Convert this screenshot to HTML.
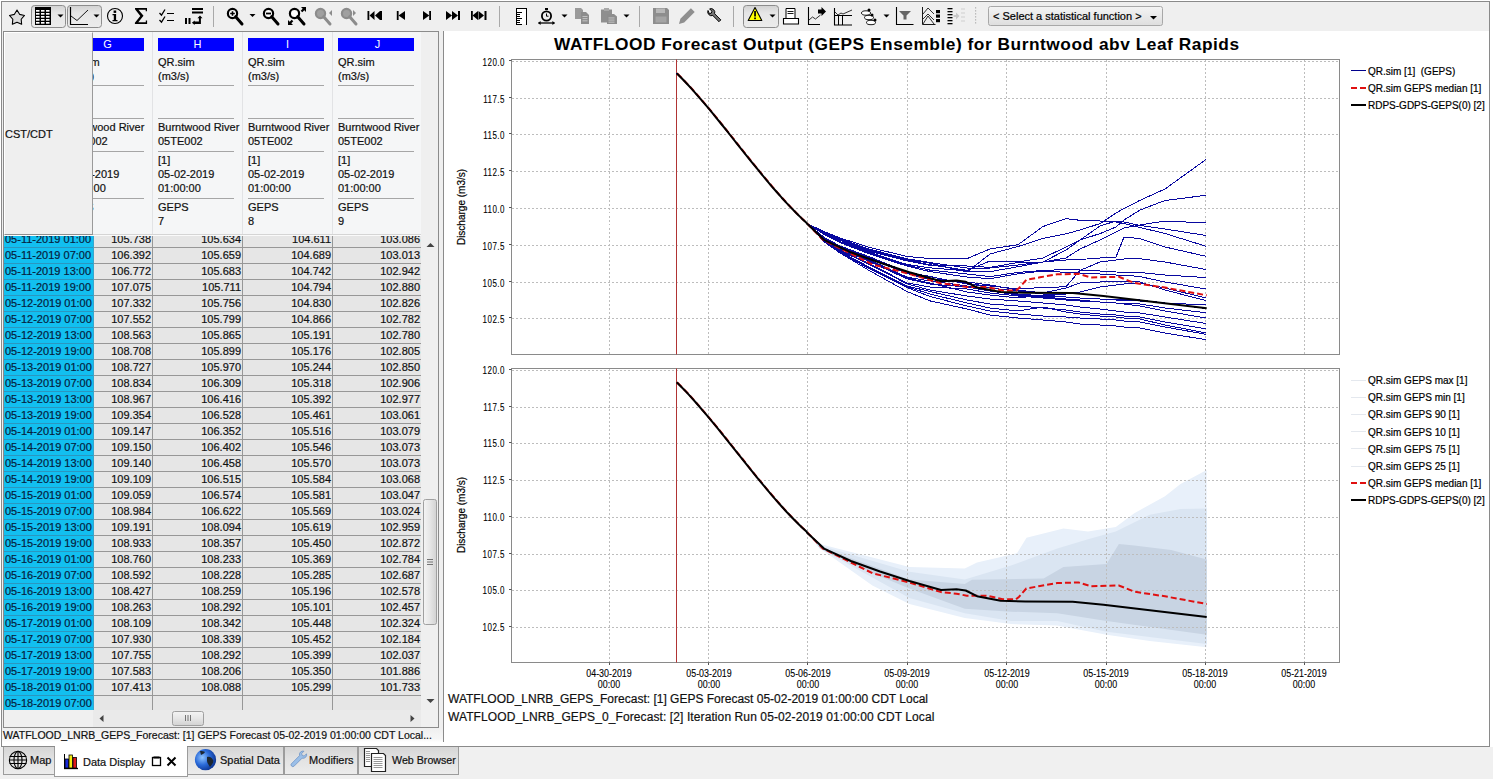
<!DOCTYPE html>
<html><head><meta charset="utf-8"><style>
*{box-sizing:border-box}
html,body{margin:0;padding:0}
body{width:1493px;height:779px;position:relative;overflow:hidden;background:#fff;font-family:"Liberation Sans",sans-serif;font-size:11px;color:#000}
.a{position:absolute}
.t{position:absolute;white-space:nowrap;line-height:1;-webkit-text-stroke:0.2px currentColor}
</style></head><body>

<div class="a" style="left:0;top:0;width:1493px;height:779px;background:#f0f0f0"></div>
<div class="a" style="left:1px;top:1px;width:1489px;height:746px;border:1px solid #8a8a8a;border-bottom:none;background:#efefef"></div>
<div class="a" style="left:1490px;top:0;width:3px;height:747px;background:#fff"></div>
<div class="a" style="left:0;top:0;width:1493px;height:1px;background:#fff"></div>
<div class="a" style="left:0;top:0;width:1px;height:747px;background:#fff"></div>
<svg class="a" style="left:0;top:0" width="1493" height="31" viewBox="0 0 1493 31">
<defs><linearGradient id="tg" x1="0" y1="0" x2="0" y2="1"><stop offset="0" stop-color="#d2d2d2"/><stop offset="0.35" stop-color="#e6e6e6"/><stop offset="1" stop-color="#ececec"/></linearGradient><linearGradient id="cg" x1="0" y1="0" x2="0" y2="1"><stop offset="0" stop-color="#f4f4f4"/><stop offset="1" stop-color="#dedede"/></linearGradient></defs>
<polygon points="17.00,10.00 19.59,14.34 24.51,15.46 21.18,19.26 21.64,24.29 17.00,22.30 12.36,24.29 12.82,19.26 9.49,15.46 14.41,14.34" fill="#dcdcdc" stroke="#000" stroke-width="1.1" stroke-linejoin="round"/>
<rect x="31.5" y="5.5" width="34" height="22" rx="3" ry="3" fill="url(#tg)" stroke="#8d8d8d" stroke-width="1"/>
<rect x="35" y="7" width="16" height="18" fill="#000"/>
<rect x="36" y="10" width="3.5" height="1.7" fill="#fff"/>
<rect x="41" y="10" width="3.5" height="1.7" fill="#fff"/>
<rect x="46" y="10" width="3.5" height="1.7" fill="#fff"/>
<rect x="36" y="13" width="3.5" height="1.7" fill="#fff"/>
<rect x="41" y="13" width="3.5" height="1.7" fill="#fff"/>
<rect x="46" y="13" width="3.5" height="1.7" fill="#fff"/>
<rect x="36" y="16" width="3.5" height="1.7" fill="#fff"/>
<rect x="41" y="16" width="3.5" height="1.7" fill="#fff"/>
<rect x="46" y="16" width="3.5" height="1.7" fill="#fff"/>
<rect x="36" y="19" width="3.5" height="1.7" fill="#fff"/>
<rect x="41" y="19" width="3.5" height="1.7" fill="#fff"/>
<rect x="46" y="19" width="3.5" height="1.7" fill="#fff"/>
<rect x="36" y="22" width="3.5" height="1.7" fill="#fff"/>
<rect x="41" y="22" width="3.5" height="1.7" fill="#fff"/>
<rect x="46" y="22" width="3.5" height="1.7" fill="#fff"/>
<path d="M57.5 14.5h6l-3 3z" fill="#000"/>
<rect x="67.5" y="5.5" width="34" height="22" rx="3" ry="3" fill="url(#tg)" stroke="#8d8d8d" stroke-width="1"/>
<path d="M70.5 7v17.5H88" fill="none" stroke="#000" stroke-width="1.2"/>
<path d="M71 16l6 4.5 11-10.5" fill="none" stroke="#000" stroke-width="0.9"/>
<path d="M93.5 14.5h6l-3 3z" fill="#000"/>
<circle cx="115" cy="16" r="7.5" fill="none" stroke="#000" stroke-width="1.1"/>
<rect x="113.6" y="10.5" width="2.6" height="2.4" fill="#000"/><path d="M112.5 14h3.6v6h1.4v1.3h-5v-1.3h1.3v-4.7h-1.3z" fill="#000"/>
<path d="M135 8h12v3.2h-1.3v-1.4h-7.2l5 6-5.2 6.4h7.5v-1.6h1.3v3.4h-12.2v-1.3l5.4-6.8-5.3-6.6z" fill="#000"/>
<path d="M159.5 13l2 2.2 3.5-5.7M159.5 20l2 2.2 3.5-5.7" fill="none" stroke="#000" stroke-width="1.3"/>
<rect x="167" y="13" width="7" height="1" fill="#000" shape-rendering="crispEdges"/><rect x="167" y="20" width="7" height="1" fill="#000" shape-rendering="crispEdges"/>
<rect x="192" y="8" width="11" height="2" fill="#000"/><rect x="192" y="11.5" width="11" height="2" fill="#000"/>
<rect x="185" y="18" width="2" height="6" fill="#000"/><rect x="188.5" y="18" width="2" height="6" fill="#000"/>
<path d="M200 15.5l2.5 2.8h-1.6v5.7h-6.2v1l-2.8-2.3 2.8-2.3v1h4.2v-3.1h-1.5z" fill="#000"/>
<rect x="213.0" y="6" width="1" height="21" fill="#a9a9a9"/>
<g><circle cx="232.5" cy="13.5" r="4.6" fill="#fff" stroke="#000" stroke-width="2.2"/><path d="M235.7 16.7L242 24.0" stroke="#000" stroke-width="3" stroke-linecap="round"/><path d="M230.2 13.5h4.6M232.5 11.2v4.6" stroke="#000" stroke-width="1.6"/></g>
<path d="M249.5 14h6l-3 3z" fill="#000"/>
<g><circle cx="268.5" cy="13.5" r="4.6" fill="#fff" stroke="#000" stroke-width="2.2"/><path d="M271.7 16.7L278 24.0" stroke="#000" stroke-width="3" stroke-linecap="round"/><path d="M266 13.5h5" stroke="#000" stroke-width="1.8"/></g>
<g><circle cx="294.5" cy="13.5" r="4.6" fill="#fff" stroke="#000" stroke-width="2.2"/><path d="M297.7 16.7L304 24.0" stroke="#000" stroke-width="3" stroke-linecap="round"/></g>
<path d="M301 7h5v5l-1.7-1.7-2 2-1.6-1.6 2-2z" fill="#000"/><path d="M288 25v-5l1.7 1.7 2-2 1.6 1.6-2 2 1.7 1.7z" fill="#000"/>
<g><circle cx="320.5" cy="13.5" r="4.6" fill="#a0a0a0" stroke="#8c8c8c" stroke-width="2.2"/><path d="M323.7 16.7L330 24.0" stroke="#8c8c8c" stroke-width="3" stroke-linecap="round"/></g>
<path d="M332 10v6l-3-3z" fill="#8c8c8c"/>
<g><circle cx="346.5" cy="13.5" r="4.6" fill="#a0a0a0" stroke="#8c8c8c" stroke-width="2.2"/><path d="M349.7 16.7L356 24.0" stroke="#8c8c8c" stroke-width="3" stroke-linecap="round"/></g>
<path d="M353 10v6l3-3z" fill="#8c8c8c"/>
<rect x="367.5" y="11" width="1.8" height="9" fill="#000"/><path d="M369.5 15.5l5-4.5v9z M375 15.5l5-4.5v9z" fill="#000"/><rect x="380" y="11" width="2" height="9" fill="#000"/>
<rect x="396.8" y="11" width="1.8" height="9" fill="#000"/><path d="M398.5 15.5l6.5-4.5v9z" fill="#000"/>
<rect x="429.2" y="11" width="1.8" height="9" fill="#000"/><path d="M423 11l6.3 4.5-6.3 4.5z" fill="#000"/>
<path d="M446 11l6 4.5-6 4.5z M452 11l6 4.5-6 4.5z" fill="#000"/><rect x="458" y="11" width="2" height="9" fill="#000"/>
<rect x="471" y="11" width="1.8" height="9" fill="#000"/><path d="M472.5 15.5l5.5-4.5v9z M478.5 11l5.5 4.5-5.5 4.5z" fill="#000"/><rect x="484.5" y="11" width="2" height="9" fill="#000"/>
<rect x="499.0" y="6" width="1" height="21" fill="#a9a9a9"/>
<g shape-rendering="crispEdges"><rect x="517" y="9" width="9" height="15" fill="#fff"/><rect x="516" y="8" width="1" height="17" fill="#000"/><rect x="516" y="8" width="11" height="1" fill="#000"/><rect x="526" y="8" width="1" height="17" fill="#000"/>
<rect x="516" y="12" width="6" height="1" fill="#000"/>
<rect x="516" y="14" width="4" height="1" fill="#000"/>
<rect x="516" y="16" width="4" height="1" fill="#000"/>
<rect x="516" y="18" width="6" height="1" fill="#000"/>
<rect x="516" y="20" width="4" height="1" fill="#000"/>
<rect x="516" y="22" width="4" height="1" fill="#000"/>
<rect x="516" y="24" width="6" height="1" fill="#000"/>
</g>
<circle cx="546.5" cy="16" r="4.6" fill="none" stroke="#000" stroke-width="1.8"/><rect x="545" y="8" width="3" height="2" fill="#000"/><path d="M546.5 13.5v2.7h2" stroke="#000" stroke-width="1" fill="none"/>
<path d="M538.5 23h16" stroke="#000" stroke-width="1.3"/><path d="M538 23l2.6-2v4zM555 23l-2.6-2v4z" fill="#000"/>
<path d="M561.5 14.5h6l-3 3z" fill="#000"/>
<path d="M575 8h6l2 2v9h-8z" fill="#9a9a9a"/><path d="M581 12h5l3 3v9h-8z" fill="#8d8d8d"/>
<rect x="582.5" y="16.0" width="5" height="0.9" fill="#c9c9c9"/>
<rect x="582.5" y="18.2" width="5" height="0.9" fill="#c9c9c9"/>
<rect x="582.5" y="20.4" width="5" height="0.9" fill="#c9c9c9"/>
<path d="M601 9.5h11v13h-11z" fill="#8f8f8f" rx="2"/><rect x="604" y="8" width="5" height="3" fill="#a8a8a8"/><path d="M607 14h7l3 2.5v7.5h-10z" fill="#8d8d8d"/>
<rect x="608.5" y="17.5" width="6" height="0.9" fill="#c9c9c9"/>
<rect x="608.5" y="19.6" width="6" height="0.9" fill="#c9c9c9"/>
<rect x="608.5" y="21.7" width="6" height="0.9" fill="#c9c9c9"/>
<path d="M623.5 14.5h6l-3 3z" fill="#000"/>
<rect x="639.0" y="6" width="1" height="21" fill="#a9a9a9"/>
<path d="M653 8h14l2 2v14h-16z" fill="#8d8d8d"/><rect x="656" y="8.5" width="9" height="4.5" fill="#b8b8b8"/><rect x="655.5" y="16.5" width="11" height="6" fill="#a4a4a4"/>
<path d="M679 24l1.4-5.2 10.5-10.5 3.8 3.8-10.5 10.5z" fill="#8f8f8f"/>
<path d="M708 10.5a3.8 3.8 0 0 0 4.8 5l6.2 6.2 1.8-1.8-6.2-6.2a3.8 3.8 0 0 0-5-4.8l2.3 2.3-0.6 1.9-1.9 0.6z" fill="#777" stroke="#000" stroke-width="1"/>
<rect x="733.0" y="6" width="1" height="21" fill="#a9a9a9"/>
<rect x="743.5" y="5.5" width="35" height="22" rx="3" ry="3" fill="url(#tg)" stroke="#8d8d8d" stroke-width="1"/>
<path d="M755 7.5l6.8 13h-13.6z" fill="#ffff00" stroke="#000" stroke-width="1.1" stroke-linejoin="round"/><rect x="754.2" y="11" width="1.7" height="5.5" fill="#000"/><rect x="754.2" y="17.5" width="1.7" height="1.7" fill="#000"/>
<path d="M769.5 14.5h6l-3 3z" fill="#000"/>
<path d="M786 8.5h9v10h-9z" fill="#fff" stroke="#000" stroke-width="1"/><path d="M787.5 11.5h6M787.5 13.5h6" stroke="#000" stroke-width="0.9"/><path d="M783.5 18.5h15v5.5h-15z" fill="#fff" stroke="#000" stroke-width="1.1"/>
<path d="M808.5 7v17.5h11.5" fill="none" stroke="#000" stroke-width="1.1"/><path d="M809 20l3.5-3 3 2 5-4" fill="none" stroke="#000" stroke-width="0.8"/><path d="M818 9.5h3.5v-2.5l4.5 4.5-4.5 4.5v-2.5h-3.5z" fill="#000"/>
<path d="M834.5 8v17h17.5" fill="none" stroke="#000" stroke-width="1.1"/><path d="M835 12l3 3 3-2 2 1 9-4" fill="none" stroke="#000" stroke-width="0.8"/><path d="M834.5 15.5h17.5" stroke="#000" stroke-width="1"/><path d="M838.5 15.5v9.5M842.5 15.5v9.5" stroke="#000" stroke-width="1"/>
<g fill="#fff" stroke="#000" stroke-width="0.9"><ellipse cx="866" cy="13" rx="4.5" ry="2.2"/><ellipse cx="869" cy="17.5" rx="4.5" ry="2.2"/><ellipse cx="871" cy="22.5" rx="4.5" ry="2.2"/></g><g fill="#000"><circle cx="869" cy="10" r="1.5"/><circle cx="872" cy="15" r="1.5"/><circle cx="875" cy="20" r="1.5"/></g>
<path d="M883.5 14.5h6l-3 3z" fill="#000"/>
<path d="M896.5 7v17.5h17" fill="none" stroke="#000" stroke-width="1.1"/><path d="M899 11h12l-4.5 4.5v4h-3v-4z" fill="#666"/>
<path d="M922.5 7v17.5h13" fill="none" stroke="#000" stroke-width="0.9"/><path d="M923 14l5-6 6 6M923 24l5-8 6 8M923 19l5-5 6 6" fill="none" stroke="#000" stroke-width="0.8"/><rect x="936" y="10" width="4" height="3.2" fill="#000"/><rect x="936" y="14.5" width="4" height="3.2" fill="#000"/><rect x="936" y="19" width="4" height="3.2" fill="#000"/>
<rect x="947.5" y="8" width="5" height="1.3" fill="#000"/>
<rect x="947.5" y="11" width="5" height="1.3" fill="#000"/>
<rect x="947.5" y="14" width="5" height="1.3" fill="#000"/>
<rect x="947.5" y="17" width="5" height="1.3" fill="#000"/>
<rect x="947.5" y="20" width="5" height="1.3" fill="#000"/>
<rect x="947.5" y="23" width="5" height="1.3" fill="#000"/>
<path d="M953.5 15h2.5v-2.5l3.5 3.5-3.5 3.5v-2.5h-2.5z" fill="#c8c8c8"/>
<rect x="961" y="8.5" width="4" height="1" fill="#d0d0d0"/>
<rect x="961" y="12.5" width="4" height="1" fill="#d0d0d0"/>
<rect x="961" y="16.5" width="4" height="1" fill="#d0d0d0"/>
<rect x="961" y="20.5" width="4" height="1" fill="#d0d0d0"/>
<rect x="975" y="7" width="1.2" height="1.6" fill="#bcbcbc"/>
<rect x="975" y="10" width="1.2" height="1.6" fill="#bcbcbc"/>
<rect x="975" y="13" width="1.2" height="1.6" fill="#bcbcbc"/>
<rect x="975" y="16" width="1.2" height="1.6" fill="#bcbcbc"/>
<rect x="975" y="19" width="1.2" height="1.6" fill="#bcbcbc"/>
<rect x="975" y="22" width="1.2" height="1.6" fill="#bcbcbc"/>
<rect x="988.5" y="6.5" width="174" height="19" rx="2" fill="url(#cg)" stroke="#a8a8a8"/>
<path d="M1150 16h7l-3.5 3.5z" fill="#000"/>
</svg>
<div class="t" style="left:993px;top:11px;font-size:11px;color:#000">&lt; Select a statistical function &gt;</div>
<div class="a" style="left:3px;top:31px;width:436px;height:697px;border:1px solid #8b8b8b;background:#f0f0f0"></div>
<div class="a" style="left:93px;top:32px;width:328px;height:203px;background:#f5f6f7"></div>
<div class="a" style="left:421px;top:32px;width:17px;height:678px;background:#efefef"></div>
<div class="a" style="left:4px;top:32px;width:89px;height:203px;background:#efefef;border-top:1px solid #fff;border-left:1px solid #fff;border-right:1px solid #9a9a9a;border-bottom:1px solid #8f8f8f"></div>
<div class="t" style="left:5px;top:129px;font-size:11px;color:#111">CST/CDT</div>
<div class="a" style="left:152px;top:32px;width:1px;height:203px;background:#e2e3e5"></div>
<div class="a" style="left:242px;top:32px;width:1px;height:203px;background:#e2e3e5"></div>
<div class="a" style="left:332px;top:32px;width:1px;height:203px;background:#e2e3e5"></div>
<div class="a" style="left:93px;top:234px;width:328px;height:1px;background:#d5d5d5"></div>
<div class="a" style="left:93px;top:32px;width:328px;height:203px;overflow:hidden">
<div class="a" style="left:-25px;top:6px;width:76px;height:13px;background:#0000ff;color:#fff;text-align:center;font-size:11px;line-height:13px;padding-left:3px">G</div>
<div class="a" style="left:-25px;top:53px;width:76px;height:1px;background:#a6a6a6"></div>
<div class="a" style="left:-25px;top:86px;width:76px;height:1px;background:#a6a6a6"></div>
<div class="a" style="left:-25px;top:119px;width:76px;height:1px;background:#a6a6a6"></div>
<div class="a" style="left:-25px;top:166px;width:76px;height:1px;background:#a6a6a6"></div>
<div class="t" style="left:-30px;top:25px;font-size:11px;color:#111">QR.sim</div>
<div class="t" style="left:-30px;top:39px;font-size:11px;color:#111">(m3/s)</div>
<div class="t" style="left:-30px;top:90px;font-size:11px;color:#111">Burntwood River</div>
<div class="t" style="left:-30px;top:104px;font-size:11px;color:#111">05TE002</div>
<div class="t" style="left:-30px;top:123px;font-size:11px;color:#111">[1]</div>
<div class="t" style="left:-30px;top:137px;font-size:11px;color:#111">05-02-2019</div>
<div class="t" style="left:-30px;top:151px;font-size:11px;color:#111">01:00:00</div>
<div class="t" style="left:-30px;top:170px;font-size:11px;color:#111">GEPS</div>
<div class="t" style="left:-30px;top:184px;font-size:11px;color:#111">7</div>
<div class="a" style="left:65px;top:6px;width:76px;height:13px;background:#0000ff;color:#fff;text-align:center;font-size:11px;line-height:13px;padding-left:3px">H</div>
<div class="a" style="left:65px;top:53px;width:76px;height:1px;background:#a6a6a6"></div>
<div class="a" style="left:65px;top:86px;width:76px;height:1px;background:#a6a6a6"></div>
<div class="a" style="left:65px;top:119px;width:76px;height:1px;background:#a6a6a6"></div>
<div class="a" style="left:65px;top:166px;width:76px;height:1px;background:#a6a6a6"></div>
<div class="t" style="left:65px;top:25px;font-size:11px;color:#111">QR.sim</div>
<div class="t" style="left:65px;top:39px;font-size:11px;color:#111">(m3/s)</div>
<div class="t" style="left:65px;top:90px;font-size:11px;color:#111">Burntwood River</div>
<div class="t" style="left:65px;top:104px;font-size:11px;color:#111">05TE002</div>
<div class="t" style="left:65px;top:123px;font-size:11px;color:#111">[1]</div>
<div class="t" style="left:65px;top:137px;font-size:11px;color:#111">05-02-2019</div>
<div class="t" style="left:65px;top:151px;font-size:11px;color:#111">01:00:00</div>
<div class="t" style="left:65px;top:170px;font-size:11px;color:#111">GEPS</div>
<div class="t" style="left:65px;top:184px;font-size:11px;color:#111">7</div>
<div class="a" style="left:155px;top:6px;width:76px;height:13px;background:#0000ff;color:#fff;text-align:center;font-size:11px;line-height:13px;padding-left:3px">I</div>
<div class="a" style="left:155px;top:53px;width:76px;height:1px;background:#a6a6a6"></div>
<div class="a" style="left:155px;top:86px;width:76px;height:1px;background:#a6a6a6"></div>
<div class="a" style="left:155px;top:119px;width:76px;height:1px;background:#a6a6a6"></div>
<div class="a" style="left:155px;top:166px;width:76px;height:1px;background:#a6a6a6"></div>
<div class="t" style="left:155px;top:25px;font-size:11px;color:#111">QR.sim</div>
<div class="t" style="left:155px;top:39px;font-size:11px;color:#111">(m3/s)</div>
<div class="t" style="left:155px;top:90px;font-size:11px;color:#111">Burntwood River</div>
<div class="t" style="left:155px;top:104px;font-size:11px;color:#111">05TE002</div>
<div class="t" style="left:155px;top:123px;font-size:11px;color:#111">[1]</div>
<div class="t" style="left:155px;top:137px;font-size:11px;color:#111">05-02-2019</div>
<div class="t" style="left:155px;top:151px;font-size:11px;color:#111">01:00:00</div>
<div class="t" style="left:155px;top:170px;font-size:11px;color:#111">GEPS</div>
<div class="t" style="left:155px;top:184px;font-size:11px;color:#111">8</div>
<div class="a" style="left:245px;top:6px;width:76px;height:13px;background:#0000ff;color:#fff;text-align:center;font-size:11px;line-height:13px;padding-left:3px">J</div>
<div class="a" style="left:245px;top:53px;width:76px;height:1px;background:#a6a6a6"></div>
<div class="a" style="left:245px;top:86px;width:76px;height:1px;background:#a6a6a6"></div>
<div class="a" style="left:245px;top:119px;width:76px;height:1px;background:#a6a6a6"></div>
<div class="a" style="left:245px;top:166px;width:76px;height:1px;background:#a6a6a6"></div>
<div class="t" style="left:245px;top:25px;font-size:11px;color:#111">QR.sim</div>
<div class="t" style="left:245px;top:39px;font-size:11px;color:#111">(m3/s)</div>
<div class="t" style="left:245px;top:90px;font-size:11px;color:#111">Burntwood River</div>
<div class="t" style="left:245px;top:104px;font-size:11px;color:#111">05TE002</div>
<div class="t" style="left:245px;top:123px;font-size:11px;color:#111">[1]</div>
<div class="t" style="left:245px;top:137px;font-size:11px;color:#111">05-02-2019</div>
<div class="t" style="left:245px;top:151px;font-size:11px;color:#111">01:00:00</div>
<div class="t" style="left:245px;top:170px;font-size:11px;color:#111">GEPS</div>
<div class="t" style="left:245px;top:184px;font-size:11px;color:#111">9</div>
</div>
<div class="a" style="left:4px;top:235px;width:417px;height:1px;background:#fafafa"></div>
<div class="a" style="left:4px;top:236px;width:417px;height:474px;overflow:hidden">
<div class="a" style="left:0;top:-4px;width:90px;height:16px;background:#12bff0;border-bottom:1px solid #2a97c0"></div>
<div class="t" style="left:1px;top:-2px;font-size:11px;color:#06213d">05-11-2019 01:00</div>
<div class="a" style="left:90px;top:-4px;width:327px;height:16px;background:#e6e6e6;border-bottom:1px solid #979797"></div>
<div class="t" style="left:-53px;width:200px;text-align:right;top:-2px;font-size:11px;color:#111">105.738</div>
<div class="t" style="left:37px;width:200px;text-align:right;top:-2px;font-size:11px;color:#111">105.634</div>
<div class="t" style="left:127px;width:200px;text-align:right;top:-2px;font-size:11px;color:#111">104.611</div>
<div class="t" style="left:216px;width:200px;text-align:right;top:-2px;font-size:11px;color:#111">103.086</div>
<div class="a" style="left:0;top:12px;width:90px;height:16px;background:#12bff0;border-bottom:1px solid #2a97c0"></div>
<div class="t" style="left:1px;top:14px;font-size:11px;color:#06213d">05-11-2019 07:00</div>
<div class="a" style="left:90px;top:12px;width:327px;height:16px;background:#e6e6e6;border-bottom:1px solid #979797"></div>
<div class="t" style="left:-53px;width:200px;text-align:right;top:14px;font-size:11px;color:#111">106.392</div>
<div class="t" style="left:37px;width:200px;text-align:right;top:14px;font-size:11px;color:#111">105.659</div>
<div class="t" style="left:127px;width:200px;text-align:right;top:14px;font-size:11px;color:#111">104.689</div>
<div class="t" style="left:216px;width:200px;text-align:right;top:14px;font-size:11px;color:#111">103.013</div>
<div class="a" style="left:0;top:28px;width:90px;height:16px;background:#12bff0;border-bottom:1px solid #2a97c0"></div>
<div class="t" style="left:1px;top:30px;font-size:11px;color:#06213d">05-11-2019 13:00</div>
<div class="a" style="left:90px;top:28px;width:327px;height:16px;background:#e6e6e6;border-bottom:1px solid #979797"></div>
<div class="t" style="left:-53px;width:200px;text-align:right;top:30px;font-size:11px;color:#111">106.772</div>
<div class="t" style="left:37px;width:200px;text-align:right;top:30px;font-size:11px;color:#111">105.683</div>
<div class="t" style="left:127px;width:200px;text-align:right;top:30px;font-size:11px;color:#111">104.742</div>
<div class="t" style="left:216px;width:200px;text-align:right;top:30px;font-size:11px;color:#111">102.942</div>
<div class="a" style="left:0;top:44px;width:90px;height:16px;background:#12bff0;border-bottom:1px solid #2a97c0"></div>
<div class="t" style="left:1px;top:46px;font-size:11px;color:#06213d">05-11-2019 19:00</div>
<div class="a" style="left:90px;top:44px;width:327px;height:16px;background:#e6e6e6;border-bottom:1px solid #979797"></div>
<div class="t" style="left:-53px;width:200px;text-align:right;top:46px;font-size:11px;color:#111">107.075</div>
<div class="t" style="left:37px;width:200px;text-align:right;top:46px;font-size:11px;color:#111">105.711</div>
<div class="t" style="left:127px;width:200px;text-align:right;top:46px;font-size:11px;color:#111">104.794</div>
<div class="t" style="left:216px;width:200px;text-align:right;top:46px;font-size:11px;color:#111">102.880</div>
<div class="a" style="left:0;top:60px;width:90px;height:16px;background:#12bff0;border-bottom:1px solid #2a97c0"></div>
<div class="t" style="left:1px;top:62px;font-size:11px;color:#06213d">05-12-2019 01:00</div>
<div class="a" style="left:90px;top:60px;width:327px;height:16px;background:#e6e6e6;border-bottom:1px solid #979797"></div>
<div class="t" style="left:-53px;width:200px;text-align:right;top:62px;font-size:11px;color:#111">107.332</div>
<div class="t" style="left:37px;width:200px;text-align:right;top:62px;font-size:11px;color:#111">105.756</div>
<div class="t" style="left:127px;width:200px;text-align:right;top:62px;font-size:11px;color:#111">104.830</div>
<div class="t" style="left:216px;width:200px;text-align:right;top:62px;font-size:11px;color:#111">102.826</div>
<div class="a" style="left:0;top:76px;width:90px;height:16px;background:#12bff0;border-bottom:1px solid #2a97c0"></div>
<div class="t" style="left:1px;top:78px;font-size:11px;color:#06213d">05-12-2019 07:00</div>
<div class="a" style="left:90px;top:76px;width:327px;height:16px;background:#e6e6e6;border-bottom:1px solid #979797"></div>
<div class="t" style="left:-53px;width:200px;text-align:right;top:78px;font-size:11px;color:#111">107.552</div>
<div class="t" style="left:37px;width:200px;text-align:right;top:78px;font-size:11px;color:#111">105.799</div>
<div class="t" style="left:127px;width:200px;text-align:right;top:78px;font-size:11px;color:#111">104.866</div>
<div class="t" style="left:216px;width:200px;text-align:right;top:78px;font-size:11px;color:#111">102.782</div>
<div class="a" style="left:0;top:92px;width:90px;height:16px;background:#12bff0;border-bottom:1px solid #2a97c0"></div>
<div class="t" style="left:1px;top:94px;font-size:11px;color:#06213d">05-12-2019 13:00</div>
<div class="a" style="left:90px;top:92px;width:327px;height:16px;background:#e6e6e6;border-bottom:1px solid #979797"></div>
<div class="t" style="left:-53px;width:200px;text-align:right;top:94px;font-size:11px;color:#111">108.563</div>
<div class="t" style="left:37px;width:200px;text-align:right;top:94px;font-size:11px;color:#111">105.865</div>
<div class="t" style="left:127px;width:200px;text-align:right;top:94px;font-size:11px;color:#111">105.191</div>
<div class="t" style="left:216px;width:200px;text-align:right;top:94px;font-size:11px;color:#111">102.780</div>
<div class="a" style="left:0;top:108px;width:90px;height:16px;background:#12bff0;border-bottom:1px solid #2a97c0"></div>
<div class="t" style="left:1px;top:110px;font-size:11px;color:#06213d">05-12-2019 19:00</div>
<div class="a" style="left:90px;top:108px;width:327px;height:16px;background:#e6e6e6;border-bottom:1px solid #979797"></div>
<div class="t" style="left:-53px;width:200px;text-align:right;top:110px;font-size:11px;color:#111">108.708</div>
<div class="t" style="left:37px;width:200px;text-align:right;top:110px;font-size:11px;color:#111">105.899</div>
<div class="t" style="left:127px;width:200px;text-align:right;top:110px;font-size:11px;color:#111">105.176</div>
<div class="t" style="left:216px;width:200px;text-align:right;top:110px;font-size:11px;color:#111">102.805</div>
<div class="a" style="left:0;top:124px;width:90px;height:16px;background:#12bff0;border-bottom:1px solid #2a97c0"></div>
<div class="t" style="left:1px;top:126px;font-size:11px;color:#06213d">05-13-2019 01:00</div>
<div class="a" style="left:90px;top:124px;width:327px;height:16px;background:#e6e6e6;border-bottom:1px solid #979797"></div>
<div class="t" style="left:-53px;width:200px;text-align:right;top:126px;font-size:11px;color:#111">108.727</div>
<div class="t" style="left:37px;width:200px;text-align:right;top:126px;font-size:11px;color:#111">105.970</div>
<div class="t" style="left:127px;width:200px;text-align:right;top:126px;font-size:11px;color:#111">105.244</div>
<div class="t" style="left:216px;width:200px;text-align:right;top:126px;font-size:11px;color:#111">102.850</div>
<div class="a" style="left:0;top:140px;width:90px;height:16px;background:#12bff0;border-bottom:1px solid #2a97c0"></div>
<div class="t" style="left:1px;top:142px;font-size:11px;color:#06213d">05-13-2019 07:00</div>
<div class="a" style="left:90px;top:140px;width:327px;height:16px;background:#e6e6e6;border-bottom:1px solid #979797"></div>
<div class="t" style="left:-53px;width:200px;text-align:right;top:142px;font-size:11px;color:#111">108.834</div>
<div class="t" style="left:37px;width:200px;text-align:right;top:142px;font-size:11px;color:#111">106.309</div>
<div class="t" style="left:127px;width:200px;text-align:right;top:142px;font-size:11px;color:#111">105.318</div>
<div class="t" style="left:216px;width:200px;text-align:right;top:142px;font-size:11px;color:#111">102.906</div>
<div class="a" style="left:0;top:156px;width:90px;height:16px;background:#12bff0;border-bottom:1px solid #2a97c0"></div>
<div class="t" style="left:1px;top:158px;font-size:11px;color:#06213d">05-13-2019 13:00</div>
<div class="a" style="left:90px;top:156px;width:327px;height:16px;background:#e6e6e6;border-bottom:1px solid #979797"></div>
<div class="t" style="left:-53px;width:200px;text-align:right;top:158px;font-size:11px;color:#111">108.967</div>
<div class="t" style="left:37px;width:200px;text-align:right;top:158px;font-size:11px;color:#111">106.416</div>
<div class="t" style="left:127px;width:200px;text-align:right;top:158px;font-size:11px;color:#111">105.392</div>
<div class="t" style="left:216px;width:200px;text-align:right;top:158px;font-size:11px;color:#111">102.977</div>
<div class="a" style="left:0;top:172px;width:90px;height:16px;background:#12bff0;border-bottom:1px solid #2a97c0"></div>
<div class="t" style="left:1px;top:174px;font-size:11px;color:#06213d">05-13-2019 19:00</div>
<div class="a" style="left:90px;top:172px;width:327px;height:16px;background:#e6e6e6;border-bottom:1px solid #979797"></div>
<div class="t" style="left:-53px;width:200px;text-align:right;top:174px;font-size:11px;color:#111">109.354</div>
<div class="t" style="left:37px;width:200px;text-align:right;top:174px;font-size:11px;color:#111">106.528</div>
<div class="t" style="left:127px;width:200px;text-align:right;top:174px;font-size:11px;color:#111">105.461</div>
<div class="t" style="left:216px;width:200px;text-align:right;top:174px;font-size:11px;color:#111">103.061</div>
<div class="a" style="left:0;top:188px;width:90px;height:16px;background:#12bff0;border-bottom:1px solid #2a97c0"></div>
<div class="t" style="left:1px;top:190px;font-size:11px;color:#06213d">05-14-2019 01:00</div>
<div class="a" style="left:90px;top:188px;width:327px;height:16px;background:#e6e6e6;border-bottom:1px solid #979797"></div>
<div class="t" style="left:-53px;width:200px;text-align:right;top:190px;font-size:11px;color:#111">109.147</div>
<div class="t" style="left:37px;width:200px;text-align:right;top:190px;font-size:11px;color:#111">106.352</div>
<div class="t" style="left:127px;width:200px;text-align:right;top:190px;font-size:11px;color:#111">105.516</div>
<div class="t" style="left:216px;width:200px;text-align:right;top:190px;font-size:11px;color:#111">103.079</div>
<div class="a" style="left:0;top:204px;width:90px;height:16px;background:#12bff0;border-bottom:1px solid #2a97c0"></div>
<div class="t" style="left:1px;top:206px;font-size:11px;color:#06213d">05-14-2019 07:00</div>
<div class="a" style="left:90px;top:204px;width:327px;height:16px;background:#e6e6e6;border-bottom:1px solid #979797"></div>
<div class="t" style="left:-53px;width:200px;text-align:right;top:206px;font-size:11px;color:#111">109.150</div>
<div class="t" style="left:37px;width:200px;text-align:right;top:206px;font-size:11px;color:#111">106.402</div>
<div class="t" style="left:127px;width:200px;text-align:right;top:206px;font-size:11px;color:#111">105.546</div>
<div class="t" style="left:216px;width:200px;text-align:right;top:206px;font-size:11px;color:#111">103.073</div>
<div class="a" style="left:0;top:220px;width:90px;height:16px;background:#12bff0;border-bottom:1px solid #2a97c0"></div>
<div class="t" style="left:1px;top:222px;font-size:11px;color:#06213d">05-14-2019 13:00</div>
<div class="a" style="left:90px;top:220px;width:327px;height:16px;background:#e6e6e6;border-bottom:1px solid #979797"></div>
<div class="t" style="left:-53px;width:200px;text-align:right;top:222px;font-size:11px;color:#111">109.140</div>
<div class="t" style="left:37px;width:200px;text-align:right;top:222px;font-size:11px;color:#111">106.458</div>
<div class="t" style="left:127px;width:200px;text-align:right;top:222px;font-size:11px;color:#111">105.570</div>
<div class="t" style="left:216px;width:200px;text-align:right;top:222px;font-size:11px;color:#111">103.073</div>
<div class="a" style="left:0;top:236px;width:90px;height:16px;background:#12bff0;border-bottom:1px solid #2a97c0"></div>
<div class="t" style="left:1px;top:238px;font-size:11px;color:#06213d">05-14-2019 19:00</div>
<div class="a" style="left:90px;top:236px;width:327px;height:16px;background:#e6e6e6;border-bottom:1px solid #979797"></div>
<div class="t" style="left:-53px;width:200px;text-align:right;top:238px;font-size:11px;color:#111">109.109</div>
<div class="t" style="left:37px;width:200px;text-align:right;top:238px;font-size:11px;color:#111">106.515</div>
<div class="t" style="left:127px;width:200px;text-align:right;top:238px;font-size:11px;color:#111">105.584</div>
<div class="t" style="left:216px;width:200px;text-align:right;top:238px;font-size:11px;color:#111">103.068</div>
<div class="a" style="left:0;top:252px;width:90px;height:16px;background:#12bff0;border-bottom:1px solid #2a97c0"></div>
<div class="t" style="left:1px;top:254px;font-size:11px;color:#06213d">05-15-2019 01:00</div>
<div class="a" style="left:90px;top:252px;width:327px;height:16px;background:#e6e6e6;border-bottom:1px solid #979797"></div>
<div class="t" style="left:-53px;width:200px;text-align:right;top:254px;font-size:11px;color:#111">109.059</div>
<div class="t" style="left:37px;width:200px;text-align:right;top:254px;font-size:11px;color:#111">106.574</div>
<div class="t" style="left:127px;width:200px;text-align:right;top:254px;font-size:11px;color:#111">105.581</div>
<div class="t" style="left:216px;width:200px;text-align:right;top:254px;font-size:11px;color:#111">103.047</div>
<div class="a" style="left:0;top:268px;width:90px;height:16px;background:#12bff0;border-bottom:1px solid #2a97c0"></div>
<div class="t" style="left:1px;top:270px;font-size:11px;color:#06213d">05-15-2019 07:00</div>
<div class="a" style="left:90px;top:268px;width:327px;height:16px;background:#e6e6e6;border-bottom:1px solid #979797"></div>
<div class="t" style="left:-53px;width:200px;text-align:right;top:270px;font-size:11px;color:#111">108.984</div>
<div class="t" style="left:37px;width:200px;text-align:right;top:270px;font-size:11px;color:#111">106.622</div>
<div class="t" style="left:127px;width:200px;text-align:right;top:270px;font-size:11px;color:#111">105.569</div>
<div class="t" style="left:216px;width:200px;text-align:right;top:270px;font-size:11px;color:#111">103.024</div>
<div class="a" style="left:0;top:284px;width:90px;height:16px;background:#12bff0;border-bottom:1px solid #2a97c0"></div>
<div class="t" style="left:1px;top:286px;font-size:11px;color:#06213d">05-15-2019 13:00</div>
<div class="a" style="left:90px;top:284px;width:327px;height:16px;background:#e6e6e6;border-bottom:1px solid #979797"></div>
<div class="t" style="left:-53px;width:200px;text-align:right;top:286px;font-size:11px;color:#111">109.191</div>
<div class="t" style="left:37px;width:200px;text-align:right;top:286px;font-size:11px;color:#111">108.094</div>
<div class="t" style="left:127px;width:200px;text-align:right;top:286px;font-size:11px;color:#111">105.619</div>
<div class="t" style="left:216px;width:200px;text-align:right;top:286px;font-size:11px;color:#111">102.959</div>
<div class="a" style="left:0;top:300px;width:90px;height:16px;background:#12bff0;border-bottom:1px solid #2a97c0"></div>
<div class="t" style="left:1px;top:302px;font-size:11px;color:#06213d">05-15-2019 19:00</div>
<div class="a" style="left:90px;top:300px;width:327px;height:16px;background:#e6e6e6;border-bottom:1px solid #979797"></div>
<div class="t" style="left:-53px;width:200px;text-align:right;top:302px;font-size:11px;color:#111">108.933</div>
<div class="t" style="left:37px;width:200px;text-align:right;top:302px;font-size:11px;color:#111">108.357</div>
<div class="t" style="left:127px;width:200px;text-align:right;top:302px;font-size:11px;color:#111">105.450</div>
<div class="t" style="left:216px;width:200px;text-align:right;top:302px;font-size:11px;color:#111">102.872</div>
<div class="a" style="left:0;top:316px;width:90px;height:16px;background:#12bff0;border-bottom:1px solid #2a97c0"></div>
<div class="t" style="left:1px;top:318px;font-size:11px;color:#06213d">05-16-2019 01:00</div>
<div class="a" style="left:90px;top:316px;width:327px;height:16px;background:#e6e6e6;border-bottom:1px solid #979797"></div>
<div class="t" style="left:-53px;width:200px;text-align:right;top:318px;font-size:11px;color:#111">108.760</div>
<div class="t" style="left:37px;width:200px;text-align:right;top:318px;font-size:11px;color:#111">108.233</div>
<div class="t" style="left:127px;width:200px;text-align:right;top:318px;font-size:11px;color:#111">105.369</div>
<div class="t" style="left:216px;width:200px;text-align:right;top:318px;font-size:11px;color:#111">102.784</div>
<div class="a" style="left:0;top:332px;width:90px;height:16px;background:#12bff0;border-bottom:1px solid #2a97c0"></div>
<div class="t" style="left:1px;top:334px;font-size:11px;color:#06213d">05-16-2019 07:00</div>
<div class="a" style="left:90px;top:332px;width:327px;height:16px;background:#e6e6e6;border-bottom:1px solid #979797"></div>
<div class="t" style="left:-53px;width:200px;text-align:right;top:334px;font-size:11px;color:#111">108.592</div>
<div class="t" style="left:37px;width:200px;text-align:right;top:334px;font-size:11px;color:#111">108.228</div>
<div class="t" style="left:127px;width:200px;text-align:right;top:334px;font-size:11px;color:#111">105.285</div>
<div class="t" style="left:216px;width:200px;text-align:right;top:334px;font-size:11px;color:#111">102.687</div>
<div class="a" style="left:0;top:348px;width:90px;height:16px;background:#12bff0;border-bottom:1px solid #2a97c0"></div>
<div class="t" style="left:1px;top:350px;font-size:11px;color:#06213d">05-16-2019 13:00</div>
<div class="a" style="left:90px;top:348px;width:327px;height:16px;background:#e6e6e6;border-bottom:1px solid #979797"></div>
<div class="t" style="left:-53px;width:200px;text-align:right;top:350px;font-size:11px;color:#111">108.427</div>
<div class="t" style="left:37px;width:200px;text-align:right;top:350px;font-size:11px;color:#111">108.259</div>
<div class="t" style="left:127px;width:200px;text-align:right;top:350px;font-size:11px;color:#111">105.196</div>
<div class="t" style="left:216px;width:200px;text-align:right;top:350px;font-size:11px;color:#111">102.578</div>
<div class="a" style="left:0;top:364px;width:90px;height:16px;background:#12bff0;border-bottom:1px solid #2a97c0"></div>
<div class="t" style="left:1px;top:366px;font-size:11px;color:#06213d">05-16-2019 19:00</div>
<div class="a" style="left:90px;top:364px;width:327px;height:16px;background:#e6e6e6;border-bottom:1px solid #979797"></div>
<div class="t" style="left:-53px;width:200px;text-align:right;top:366px;font-size:11px;color:#111">108.263</div>
<div class="t" style="left:37px;width:200px;text-align:right;top:366px;font-size:11px;color:#111">108.292</div>
<div class="t" style="left:127px;width:200px;text-align:right;top:366px;font-size:11px;color:#111">105.101</div>
<div class="t" style="left:216px;width:200px;text-align:right;top:366px;font-size:11px;color:#111">102.457</div>
<div class="a" style="left:0;top:380px;width:90px;height:16px;background:#12bff0;border-bottom:1px solid #2a97c0"></div>
<div class="t" style="left:1px;top:382px;font-size:11px;color:#06213d">05-17-2019 01:00</div>
<div class="a" style="left:90px;top:380px;width:327px;height:16px;background:#e6e6e6;border-bottom:1px solid #979797"></div>
<div class="t" style="left:-53px;width:200px;text-align:right;top:382px;font-size:11px;color:#111">108.109</div>
<div class="t" style="left:37px;width:200px;text-align:right;top:382px;font-size:11px;color:#111">108.342</div>
<div class="t" style="left:127px;width:200px;text-align:right;top:382px;font-size:11px;color:#111">105.448</div>
<div class="t" style="left:216px;width:200px;text-align:right;top:382px;font-size:11px;color:#111">102.324</div>
<div class="a" style="left:0;top:396px;width:90px;height:16px;background:#12bff0;border-bottom:1px solid #2a97c0"></div>
<div class="t" style="left:1px;top:398px;font-size:11px;color:#06213d">05-17-2019 07:00</div>
<div class="a" style="left:90px;top:396px;width:327px;height:16px;background:#e6e6e6;border-bottom:1px solid #979797"></div>
<div class="t" style="left:-53px;width:200px;text-align:right;top:398px;font-size:11px;color:#111">107.930</div>
<div class="t" style="left:37px;width:200px;text-align:right;top:398px;font-size:11px;color:#111">108.339</div>
<div class="t" style="left:127px;width:200px;text-align:right;top:398px;font-size:11px;color:#111">105.452</div>
<div class="t" style="left:216px;width:200px;text-align:right;top:398px;font-size:11px;color:#111">102.184</div>
<div class="a" style="left:0;top:412px;width:90px;height:16px;background:#12bff0;border-bottom:1px solid #2a97c0"></div>
<div class="t" style="left:1px;top:414px;font-size:11px;color:#06213d">05-17-2019 13:00</div>
<div class="a" style="left:90px;top:412px;width:327px;height:16px;background:#e6e6e6;border-bottom:1px solid #979797"></div>
<div class="t" style="left:-53px;width:200px;text-align:right;top:414px;font-size:11px;color:#111">107.755</div>
<div class="t" style="left:37px;width:200px;text-align:right;top:414px;font-size:11px;color:#111">108.292</div>
<div class="t" style="left:127px;width:200px;text-align:right;top:414px;font-size:11px;color:#111">105.399</div>
<div class="t" style="left:216px;width:200px;text-align:right;top:414px;font-size:11px;color:#111">102.037</div>
<div class="a" style="left:0;top:428px;width:90px;height:16px;background:#12bff0;border-bottom:1px solid #2a97c0"></div>
<div class="t" style="left:1px;top:430px;font-size:11px;color:#06213d">05-17-2019 19:00</div>
<div class="a" style="left:90px;top:428px;width:327px;height:16px;background:#e6e6e6;border-bottom:1px solid #979797"></div>
<div class="t" style="left:-53px;width:200px;text-align:right;top:430px;font-size:11px;color:#111">107.583</div>
<div class="t" style="left:37px;width:200px;text-align:right;top:430px;font-size:11px;color:#111">108.206</div>
<div class="t" style="left:127px;width:200px;text-align:right;top:430px;font-size:11px;color:#111">105.350</div>
<div class="t" style="left:216px;width:200px;text-align:right;top:430px;font-size:11px;color:#111">101.886</div>
<div class="a" style="left:0;top:444px;width:90px;height:16px;background:#12bff0;border-bottom:1px solid #2a97c0"></div>
<div class="t" style="left:1px;top:446px;font-size:11px;color:#06213d">05-18-2019 01:00</div>
<div class="a" style="left:90px;top:444px;width:327px;height:16px;background:#e6e6e6;border-bottom:1px solid #979797"></div>
<div class="t" style="left:-53px;width:200px;text-align:right;top:446px;font-size:11px;color:#111">107.413</div>
<div class="t" style="left:37px;width:200px;text-align:right;top:446px;font-size:11px;color:#111">108.088</div>
<div class="t" style="left:127px;width:200px;text-align:right;top:446px;font-size:11px;color:#111">105.299</div>
<div class="t" style="left:216px;width:200px;text-align:right;top:446px;font-size:11px;color:#111">101.733</div>
<div class="a" style="left:0;top:460px;width:90px;height:16px;background:#12bff0;border-bottom:1px solid #2a97c0"></div>
<div class="t" style="left:1px;top:462px;font-size:11px;color:#06213d">05-18-2019 07:00</div>
<div class="a" style="left:90px;top:460px;width:327px;height:16px;background:#e6e6e6;border-bottom:1px solid #979797"></div>
<div class="a" style="left:148px;top:0;width:1px;height:475px;background:#979797"></div>
<div class="a" style="left:238px;top:0;width:1px;height:475px;background:#979797"></div>
<div class="a" style="left:328px;top:0;width:1px;height:475px;background:#979797"></div>
<div class="a" style="left:89px;top:0;width:1px;height:475px;background:#3aa6cc"></div>
</div>
<div class="a" style="left:93px;top:710px;width:328px;height:17px;background:#eaeaea"></div>
<svg class="a" style="left:0;top:0" width="445" height="745" viewBox="0 0 445 745"><path d="M99.5 718.5l4-3.5v7z" fill="#444"/><path d="M414.5 718.5l-4-3.5v7z" fill="#444"/><rect x="172.5" y="711.5" width="31" height="14" rx="2" fill="url(#hth)" stroke="#a0a0a0"/><path d="M185.5 715v6M188 715v6M190.5 715v6" stroke="#666" stroke-width="0.9"/><path d="M430.5 243l-4 4h8z" fill="#444"/><path d="M430.5 703l-4-4h8z" fill="#444"/><defs><linearGradient id="vth" x1="0" y1="0" x2="1" y2="0"><stop offset="0" stop-color="#f4f4f4"/><stop offset="0.5" stop-color="#e6e6e6"/><stop offset="1" stop-color="#d2d2d2"/></linearGradient><linearGradient id="hth" x1="0" y1="0" x2="0" y2="1"><stop offset="0" stop-color="#f4f4f4"/><stop offset="0.5" stop-color="#e6e6e6"/><stop offset="1" stop-color="#d2d2d2"/></linearGradient></defs><rect x="423.5" y="499.5" width="13" height="125" rx="2" fill="url(#vth)" stroke="#a0a0a0"/><path d="M427 559.5h6M427 562h6M427 564.5h6" stroke="#666" stroke-width="0.9"/></svg>
<div class="a" style="left:2px;top:728px;width:441px;height:18px;background:linear-gradient(#efefef,#f6f6f6 60%,#fff 80%)"></div>
<div class="t" style="left:3px;top:730px;font-size:11px;color:#111;transform:scaleX(0.955);transform-origin:0 0">WATFLOOD_LNRB_GEPS_Forecast: [1] GEPS Forecast 05-02-2019 01:00:00 CDT Local...</div>
<div class="a" style="left:443px;top:31px;width:1046px;height:715px;background:#fff"></div>
<div class="a" style="left:443px;top:31px;width:1px;height:711px;background:#8b8b8b"></div>
<svg class="a" style="left:0;top:0" width="1493" height="779" viewBox="0 0 1493 779">
<defs><clipPath id="ct"><rect x="512" y="60" width="827" height="294"/></clipPath><clipPath id="cb"><rect x="512" y="369" width="827" height="293"/></clipPath></defs>
<polygon points="806.9,531.6 820.0,544.0 909.4,567.0 964.8,568.6 977.0,562.4 1017.0,553.2 1026.5,537.8 1063.4,528.6 1088.0,531.6 1115.8,527.0 1134.3,513.2 1165.0,496.2 1180.5,483.9 1206.7,470.0 1206.7,647.2 1149.7,641.0 1106.6,634.8 1057.0,625.6 1011.0,624.0 964.8,617.9 909.4,604.0 872.4,585.5 820.0,548.6 806.9,531.6" fill="#e8f0fa"/>
<polygon points="806.9,531.6 820.0,545.5 909.4,571.7 964.8,579.4 1011.0,565.5 1057.3,548.6 1088.0,539.3 1115.8,531.6 1149.7,514.7 1180.5,509.1 1206.7,508.5 1206.7,644.0 1106.6,631.8 1057.3,621.0 1011.0,621.0 964.8,613.3 909.4,597.9 820.0,548.6 806.9,531.6" fill="#dae5f2"/>
<polygon points="806.9,531.6 820.0,547.0 909.4,579.4 964.8,584.0 972.0,579.8 1043.6,578.5 1063.4,567.0 1106.6,564.0 1118.9,544.0 1134.3,545.5 1171.2,550.0 1206.7,559.4 1206.7,634.8 1106.6,621.0 1057.3,613.3 1011.0,611.7 964.8,608.7 909.4,588.6 872.4,573.2 820.0,548.6 806.9,531.6" fill="#c8d4e3"/>
<path d="M609.5 59.5V354.5M609.5 368.5V662.5 M708.5 59.5V354.5M708.5 368.5V662.5 M807.5 59.5V354.5M807.5 368.5V662.5 M907.5 59.5V354.5M907.5 368.5V662.5 M1006.5 59.5V354.5M1006.5 368.5V662.5 M1106.5 59.5V354.5M1106.5 368.5V662.5 M1205.5 59.5V354.5M1205.5 368.5V662.5 M1304.5 59.5V354.5M1304.5 368.5V662.5 M511.5 318.5H1339.5M511.5 627.5H1339.5 M511.5 282.5H1339.5M511.5 590.5H1339.5 M511.5 245.5H1339.5M511.5 554.5H1339.5 M511.5 208.5H1339.5M511.5 517.5H1339.5 M511.5 171.5H1339.5M511.5 480.5H1339.5 M511.5 134.5H1339.5M511.5 443.5H1339.5 M511.5 98.5H1339.5M511.5 407.5H1339.5 M511.5 61.5H1339.5M511.5 370.5H1339.5" stroke="#bdbdbd" stroke-width="1" stroke-dasharray="2 2" fill="none" shape-rendering="crispEdges"/>
<rect x="511.5" y="59.5" width="828.0" height="295.0" fill="none" stroke="#8a8a8a"/>
<rect x="511.5" y="368.5" width="828.0" height="294.0" fill="none" stroke="#8a8a8a"/>
<path d="M509 317.5H511.5M509 626.5H511.5 M509 281.5H511.5M509 589.5H511.5 M509 244.5H511.5M509 553.5H511.5 M509 207.5H511.5M509 516.5H511.5 M509 170.5H511.5M509 479.5H511.5 M509 133.5H511.5M509 442.5H511.5 M509 97.5H511.5M509 406.5H511.5 M509 60.5H511.5M509 369.5H511.5 M609.5 662.5V665 M708.5 662.5V665 M807.5 662.5V665 M907.5 662.5V665 M1006.5 662.5V665 M1106.5 662.5V665 M1205.5 662.5V665 M1304.5 662.5V665" stroke="#555" stroke-width="1"/>
<path d="M676.5 59.5V354.5M676.5 368.5V662.5" stroke="#b03434" stroke-width="1"/>
<g clip-path="url(#ct)"><path d="M676.7 73.2 L681.7 78.2 L686.7 83.5 L691.7 88.9 L696.7 94.6 L701.7 100.3 L706.7 106.2 L711.7 112.2 L716.7 118.3 L721.7 124.5 L726.7 130.7 L731.7 137.0 L736.7 143.3 L741.7 149.6 L746.7 155.8 L751.7 162.1 L756.7 168.2 L761.7 174.3 L766.7 180.3 L771.7 186.3 L776.7 192.0 L781.7 197.7 L786.7 203.1 L791.7 208.4 L796.7 213.5 L801.7 218.4 L806.7 223.0 L806.9 223.6 L825.0 233.0 L840.0 239.5 L870.0 250.0 L907.0 259.5 L930.0 263.2 L967.0 272.0 L990.0 254.0 L1018.0 246.5 L1043.0 238.5 L1066.0 233.8 L1080.0 230.0 L1100.0 223.6 L1116.0 213.0 L1124.0 208.5 L1140.0 200.3 L1165.0 189.0 L1206.0 159.5 M676.7 73.2 L681.7 78.2 L686.7 83.5 L691.7 88.9 L696.7 94.6 L701.7 100.3 L706.7 106.2 L711.7 112.2 L716.7 118.3 L721.7 124.5 L726.7 130.7 L731.7 137.0 L736.7 143.3 L741.7 149.6 L746.7 155.8 L751.7 162.1 L756.7 168.2 L761.7 174.3 L766.7 180.3 L771.7 186.3 L776.7 192.0 L781.7 197.7 L786.7 203.1 L791.7 208.4 L796.7 213.5 L801.7 218.4 L806.7 223.0 L806.9 223.6 L825.0 232.0 L840.0 238.0 L870.0 247.5 L907.0 256.5 L930.0 258.5 L967.0 258.6 L990.0 249.0 L1018.0 244.7 L1043.0 226.5 L1066.0 218.6 L1080.0 220.3 L1100.0 221.0 L1116.0 222.0 L1124.0 223.5 L1140.0 227.5 L1165.0 233.5 L1206.0 246.3 M676.7 73.2 L681.7 78.2 L686.7 83.5 L691.7 88.9 L696.7 94.6 L701.7 100.3 L706.7 106.2 L711.7 112.2 L716.7 118.3 L721.7 124.5 L726.7 130.7 L731.7 137.0 L736.7 143.3 L741.7 149.6 L746.7 155.8 L751.7 162.1 L756.7 168.2 L761.7 174.3 L766.7 180.3 L771.7 186.3 L776.7 192.0 L781.7 197.7 L786.7 203.1 L791.7 208.4 L796.7 213.5 L801.7 218.4 L806.7 223.0 L806.9 223.6 L825.0 233.2 L840.0 240.0 L870.0 250.7 L907.0 260.2 L930.0 264.7 L967.0 270.4 L990.0 261.0 L1018.0 262.0 L1043.0 258.0 L1066.0 247.0 L1080.0 240.0 L1100.0 233.6 L1116.0 227.0 L1124.0 220.0 L1140.0 210.0 L1165.0 200.5 L1206.0 195.3 M676.7 73.2 L681.7 78.2 L686.7 83.5 L691.7 88.9 L696.7 94.6 L701.7 100.3 L706.7 106.2 L711.7 112.2 L716.7 118.3 L721.7 124.5 L726.7 130.7 L731.7 137.0 L736.7 143.3 L741.7 149.6 L746.7 155.8 L751.7 162.1 L756.7 168.2 L761.7 174.3 L766.7 180.3 L771.7 186.3 L776.7 192.0 L781.7 197.7 L786.7 203.1 L791.7 208.4 L796.7 213.5 L801.7 218.4 L806.7 223.0 L806.9 223.6 L825.0 233.5 L840.0 240.4 L870.0 251.4 L907.0 260.9 L930.0 265.5 L967.0 266.0 L990.0 267.4 L1018.0 262.5 L1043.0 262.0 L1066.0 260.0 L1080.0 259.5 L1100.0 258.0 L1116.0 257.0 L1124.0 237.0 L1140.0 238.6 L1165.0 247.0 L1206.0 256.3 M676.7 73.2 L681.7 78.2 L686.7 83.5 L691.7 88.9 L696.7 94.6 L701.7 100.3 L706.7 106.2 L711.7 112.2 L716.7 118.3 L721.7 124.5 L726.7 130.7 L731.7 137.0 L736.7 143.3 L741.7 149.6 L746.7 155.8 L751.7 162.1 L756.7 168.2 L761.7 174.3 L766.7 180.3 L771.7 186.3 L776.7 192.0 L781.7 197.7 L786.7 203.1 L791.7 208.4 L796.7 213.5 L801.7 218.4 L806.7 223.0 L806.9 223.6 L825.0 232.8 L840.0 239.0 L870.0 249.3 L907.0 258.8 L930.0 262.5 L967.0 268.0 L990.0 268.0 L1018.0 265.0 L1043.0 262.0 L1066.0 258.0 L1080.0 249.0 L1100.0 240.0 L1116.0 232.0 L1124.0 228.0 L1140.0 225.0 L1165.0 221.0 L1206.0 223.0 M676.7 73.2 L681.7 78.2 L686.7 83.5 L691.7 88.9 L696.7 94.6 L701.7 100.3 L706.7 106.2 L711.7 112.2 L716.7 118.3 L721.7 124.5 L726.7 130.7 L731.7 137.0 L736.7 143.3 L741.7 149.6 L746.7 155.8 L751.7 162.1 L756.7 168.2 L761.7 174.3 L766.7 180.3 L771.7 186.3 L776.7 192.0 L781.7 197.7 L786.7 203.1 L791.7 208.4 L796.7 213.5 L801.7 218.4 L806.7 223.0 L806.9 223.6 L825.0 234.5 L840.0 241.5 L870.0 252.5 L907.0 264.5 L930.0 267.8 L967.0 271.0 L990.0 271.7 L1018.0 266.7 L1043.0 262.0 L1066.0 250.0 L1080.0 240.0 L1100.0 226.0 L1116.0 221.0 L1124.0 222.0 L1140.0 225.5 L1165.0 229.0 L1206.0 235.5 M676.7 73.2 L681.7 78.2 L686.7 83.5 L691.7 88.9 L696.7 94.6 L701.7 100.3 L706.7 106.2 L711.7 112.2 L716.7 118.3 L721.7 124.5 L726.7 130.7 L731.7 137.0 L736.7 143.3 L741.7 149.6 L746.7 155.8 L751.7 162.1 L756.7 168.2 L761.7 174.3 L766.7 180.3 L771.7 186.3 L776.7 192.0 L781.7 197.7 L786.7 203.1 L791.7 208.4 L796.7 213.5 L801.7 218.4 L806.7 223.0 L806.9 223.6 L825.0 238.0 L840.0 246.0 L870.0 257.0 L907.0 272.0 L930.0 276.5 L967.0 284.0 L990.0 286.0 L1018.0 288.9 L1043.0 287.5 L1066.0 286.8 L1080.0 270.4 L1100.0 262.0 L1116.0 260.0 L1124.0 259.0 L1140.0 258.7 L1165.0 262.0 L1206.0 269.5 M676.7 73.2 L681.7 78.2 L686.7 83.5 L691.7 88.9 L696.7 94.6 L701.7 100.3 L706.7 106.2 L711.7 112.2 L716.7 118.3 L721.7 124.5 L726.7 130.7 L731.7 137.0 L736.7 143.3 L741.7 149.6 L746.7 155.8 L751.7 162.1 L756.7 168.2 L761.7 174.3 L766.7 180.3 L771.7 186.3 L776.7 192.0 L781.7 197.7 L786.7 203.1 L791.7 208.4 L796.7 213.5 L801.7 218.4 L806.7 223.0 L806.9 223.6 L825.0 234.8 L840.0 242.0 L870.0 253.3 L907.0 265.3 L930.0 270.1 L967.0 274.0 L990.0 276.6 L1018.0 272.4 L1043.0 270.5 L1066.0 269.5 L1080.0 270.0 L1100.0 271.0 L1116.0 272.0 L1124.0 272.2 L1140.0 272.5 L1165.0 275.0 L1206.0 277.6 M676.7 73.2 L681.7 78.2 L686.7 83.5 L691.7 88.9 L696.7 94.6 L701.7 100.3 L706.7 106.2 L711.7 112.2 L716.7 118.3 L721.7 124.5 L726.7 130.7 L731.7 137.0 L736.7 143.3 L741.7 149.6 L746.7 155.8 L751.7 162.1 L756.7 168.2 L761.7 174.3 L766.7 180.3 L771.7 186.3 L776.7 192.0 L781.7 197.7 L786.7 203.1 L791.7 208.4 L796.7 213.5 L801.7 218.4 L806.7 223.0 L806.9 223.6 L825.0 235.0 L840.0 242.6 L870.0 254.1 L907.0 266.1 L930.0 271.6 L967.0 277.0 L990.0 278.7 L1018.0 273.8 L1043.0 271.0 L1066.0 272.4 L1080.0 273.0 L1100.0 274.0 L1116.0 275.0 L1124.0 275.0 L1140.0 276.6 L1165.0 282.0 L1206.0 289.0 M676.7 73.2 L681.7 78.2 L686.7 83.5 L691.7 88.9 L696.7 94.6 L701.7 100.3 L706.7 106.2 L711.7 112.2 L716.7 118.3 L721.7 124.5 L726.7 130.7 L731.7 137.0 L736.7 143.3 L741.7 149.6 L746.7 155.8 L751.7 162.1 L756.7 168.2 L761.7 174.3 L766.7 180.3 L771.7 186.3 L776.7 192.0 L781.7 197.7 L786.7 203.1 L791.7 208.4 L796.7 213.5 L801.7 218.4 L806.7 223.0 L806.9 223.6 L825.0 238.3 L840.0 246.5 L870.0 257.8 L907.0 272.8 L930.0 278.6 L967.0 282.0 L990.0 285.0 L1018.0 290.0 L1043.0 293.0 L1066.0 288.0 L1080.0 283.0 L1100.0 282.0 L1116.0 281.0 L1124.0 281.0 L1140.0 282.0 L1165.0 290.0 L1206.0 300.6 M676.7 73.2 L681.7 78.2 L686.7 83.5 L691.7 88.9 L696.7 94.6 L701.7 100.3 L706.7 106.2 L711.7 112.2 L716.7 118.3 L721.7 124.5 L726.7 130.7 L731.7 137.0 L736.7 143.3 L741.7 149.6 L746.7 155.8 L751.7 162.1 L756.7 168.2 L761.7 174.3 L766.7 180.3 L771.7 186.3 L776.7 192.0 L781.7 197.7 L786.7 203.1 L791.7 208.4 L796.7 213.5 L801.7 218.4 L806.7 223.0 L806.9 223.6 L825.0 238.5 L840.0 247.1 L870.0 258.6 L907.0 273.6 L930.0 279.5 L967.0 283.0 L990.0 288.0 L1018.0 291.0 L1043.0 294.0 L1066.0 294.0 L1080.0 292.0 L1100.0 287.0 L1116.0 285.0 L1124.0 284.0 L1140.0 283.0 L1165.0 288.0 L1206.0 298.0 M676.7 73.2 L681.7 78.2 L686.7 83.5 L691.7 88.9 L696.7 94.6 L701.7 100.3 L706.7 106.2 L711.7 112.2 L716.7 118.3 L721.7 124.5 L726.7 130.7 L731.7 137.0 L736.7 143.3 L741.7 149.6 L746.7 155.8 L751.7 162.1 L756.7 168.2 L761.7 174.3 L766.7 180.3 L771.7 186.3 L776.7 192.0 L781.7 197.7 L786.7 203.1 L791.7 208.4 L796.7 213.5 L801.7 218.4 L806.7 223.0 L806.9 223.6 L825.0 239.8 L840.0 249.0 L870.0 261.8 L907.0 278.8 L930.0 284.0 L967.0 287.0 L990.0 291.0 L1018.0 294.0 L1043.0 296.0 L1066.0 297.0 L1080.0 298.0 L1100.0 299.0 L1116.0 299.0 L1124.0 299.0 L1140.0 300.0 L1165.0 303.0 L1206.0 308.6 M676.7 73.2 L681.7 78.2 L686.7 83.5 L691.7 88.9 L696.7 94.6 L701.7 100.3 L706.7 106.2 L711.7 112.2 L716.7 118.3 L721.7 124.5 L726.7 130.7 L731.7 137.0 L736.7 143.3 L741.7 149.6 L746.7 155.8 L751.7 162.1 L756.7 168.2 L761.7 174.3 L766.7 180.3 L771.7 186.3 L776.7 192.0 L781.7 197.7 L786.7 203.1 L791.7 208.4 L796.7 213.5 L801.7 218.4 L806.7 223.0 L806.9 223.6 L825.0 240.5 L840.0 250.0 L870.0 264.0 L907.0 283.0 L930.0 287.0 L967.0 289.0 L990.0 293.0 L1018.0 296.0 L1043.0 298.0 L1066.0 300.0 L1080.0 301.0 L1100.0 302.0 L1116.0 303.0 L1124.0 303.0 L1140.0 304.0 L1165.0 308.0 L1206.0 312.7 M676.7 73.2 L681.7 78.2 L686.7 83.5 L691.7 88.9 L696.7 94.6 L701.7 100.3 L706.7 106.2 L711.7 112.2 L716.7 118.3 L721.7 124.5 L726.7 130.7 L731.7 137.0 L736.7 143.3 L741.7 149.6 L746.7 155.8 L751.7 162.1 L756.7 168.2 L761.7 174.3 L766.7 180.3 L771.7 186.3 L776.7 192.0 L781.7 197.7 L786.7 203.1 L791.7 208.4 L796.7 213.5 L801.7 218.4 L806.7 223.0 L806.9 223.6 L825.0 239.5 L840.0 248.5 L870.0 261.0 L907.0 278.0 L930.0 283.0 L967.0 292.0 L990.0 295.0 L1018.0 298.0 L1043.0 295.0 L1066.0 297.0 L1080.0 298.0 L1100.0 299.0 L1116.0 300.0 L1124.0 300.0 L1140.0 301.0 L1165.0 303.0 L1206.0 305.0 M676.7 73.2 L681.7 78.2 L686.7 83.5 L691.7 88.9 L696.7 94.6 L701.7 100.3 L706.7 106.2 L711.7 112.2 L716.7 118.3 L721.7 124.5 L726.7 130.7 L731.7 137.0 L736.7 143.3 L741.7 149.6 L746.7 155.8 L751.7 162.1 L756.7 168.2 L761.7 174.3 L766.7 180.3 L771.7 186.3 L776.7 192.0 L781.7 197.7 L786.7 203.1 L791.7 208.4 L796.7 213.5 L801.7 218.4 L806.7 223.0 L806.9 223.6 L825.0 240.8 L840.0 250.5 L870.0 264.8 L907.0 283.8 L930.0 290.1 L967.0 296.0 L990.0 299.0 L1018.0 301.0 L1043.0 303.0 L1066.0 305.0 L1080.0 307.0 L1100.0 309.0 L1116.0 311.0 L1124.0 312.0 L1140.0 313.0 L1165.0 317.0 L1206.0 323.5 M676.7 73.2 L681.7 78.2 L686.7 83.5 L691.7 88.9 L696.7 94.6 L701.7 100.3 L706.7 106.2 L711.7 112.2 L716.7 118.3 L721.7 124.5 L726.7 130.7 L731.7 137.0 L736.7 143.3 L741.7 149.6 L746.7 155.8 L751.7 162.1 L756.7 168.2 L761.7 174.3 L766.7 180.3 L771.7 186.3 L776.7 192.0 L781.7 197.7 L786.7 203.1 L791.7 208.4 L796.7 213.5 L801.7 218.4 L806.7 223.0 L806.9 223.6 L825.0 241.5 L840.0 251.5 L870.0 267.5 L907.0 286.0 L930.0 291.5 L967.0 300.0 L990.0 304.0 L1018.0 306.0 L1043.0 308.0 L1066.0 310.0 L1080.0 312.0 L1100.0 314.0 L1116.0 315.0 L1124.0 316.0 L1140.0 317.0 L1165.0 322.0 L1206.0 328.9 M676.7 73.2 L681.7 78.2 L686.7 83.5 L691.7 88.9 L696.7 94.6 L701.7 100.3 L706.7 106.2 L711.7 112.2 L716.7 118.3 L721.7 124.5 L726.7 130.7 L731.7 137.0 L736.7 143.3 L741.7 149.6 L746.7 155.8 L751.7 162.1 L756.7 168.2 L761.7 174.3 L766.7 180.3 L771.7 186.3 L776.7 192.0 L781.7 197.7 L786.7 203.1 L791.7 208.4 L796.7 213.5 L801.7 218.4 L806.7 223.0 L806.9 223.6 L825.0 241.8 L840.0 252.0 L870.0 268.3 L907.0 286.8 L930.0 294.0 L967.0 303.0 L990.0 308.0 L1018.0 311.0 L1043.0 307.0 L1066.0 312.0 L1080.0 314.0 L1100.0 316.0 L1116.0 317.0 L1124.0 318.0 L1140.0 319.0 L1165.0 325.0 L1206.0 332.9 M676.7 73.2 L681.7 78.2 L686.7 83.5 L691.7 88.9 L696.7 94.6 L701.7 100.3 L706.7 106.2 L711.7 112.2 L716.7 118.3 L721.7 124.5 L726.7 130.7 L731.7 137.0 L736.7 143.3 L741.7 149.6 L746.7 155.8 L751.7 162.1 L756.7 168.2 L761.7 174.3 L766.7 180.3 L771.7 186.3 L776.7 192.0 L781.7 197.7 L786.7 203.1 L791.7 208.4 L796.7 213.5 L801.7 218.4 L806.7 223.0 L806.9 223.6 L825.0 242.0 L840.0 252.6 L870.0 269.1 L907.0 287.6 L930.0 296.5 L967.0 306.0 L990.0 311.0 L1018.0 314.0 L1043.0 316.0 L1066.0 317.0 L1080.0 318.0 L1100.0 319.0 L1116.0 320.0 L1124.0 321.0 L1140.0 322.0 L1165.0 327.0 L1206.0 334.3 M676.7 73.2 L681.7 78.2 L686.7 83.5 L691.7 88.9 L696.7 94.6 L701.7 100.3 L706.7 106.2 L711.7 112.2 L716.7 118.3 L721.7 124.5 L726.7 130.7 L731.7 137.0 L736.7 143.3 L741.7 149.6 L746.7 155.8 L751.7 162.1 L756.7 168.2 L761.7 174.3 L766.7 180.3 L771.7 186.3 L776.7 192.0 L781.7 197.7 L786.7 203.1 L791.7 208.4 L796.7 213.5 L801.7 218.4 L806.7 223.0 L806.9 223.6 L825.0 242.5 L840.0 253.0 L870.0 271.0 L907.0 291.5 L930.0 300.9 L967.0 309.0 L990.0 315.0 L1018.0 318.0 L1043.0 320.0 L1066.0 322.0 L1080.0 324.0 L1100.0 325.0 L1116.0 326.0 L1124.0 327.0 L1140.0 328.0 L1165.0 333.0 L1206.0 339.7 M676.7 73.2 L681.7 78.2 L686.7 83.5 L691.7 88.9 L696.7 94.6 L701.7 100.3 L706.7 106.2 L711.7 112.2 L716.7 118.3 L721.7 124.5 L726.7 130.7 L731.7 137.0 L736.7 143.3 L741.7 149.6 L746.7 155.8 L751.7 162.1 L756.7 168.2 L761.7 174.3 L766.7 180.3 L771.7 186.3 L776.7 192.0 L781.7 197.7 L786.7 203.1 L791.7 208.4 L796.7 213.5 L801.7 218.4 L806.7 223.0 L806.9 223.6 L825.0 239.2 L840.0 248.0 L870.0 260.2 L907.0 277.2 L930.0 280.9 L967.0 286.0 L990.0 291.0 L1018.0 295.0 L1043.0 297.0 L1066.0 299.0 L1080.0 300.0 L1100.0 302.0 L1116.0 303.0 L1124.0 304.0 L1140.0 306.0 L1165.0 311.0 L1206.0 318.0" stroke="#0808a0" stroke-width="1" fill="none" shape-rendering="crispEdges"/>
<path d="M677.5 73.8 L682.5 78.8 L687.5 84.1 L692.5 89.5 L697.5 95.2 L702.5 100.9 L707.5 106.8 L712.5 112.8 L717.5 118.9 L722.5 125.1 L727.5 131.3 L732.5 137.6 L737.5 143.9 L742.5 150.2 L747.5 156.4 L752.5 162.7 L757.5 168.8 L762.5 174.9 L767.5 180.9 L772.5 186.9 L777.5 192.6 L782.5 198.3 L787.5 203.7 L792.5 209.0 L797.5 214.1 L802.5 219.0 L807.5 223.6 L807.7 224.2 L823.0 239.8 L872.4 264.5 L909.4 273.8 L941.1 283.4 L956.5 285.0 L966.8 287.0 L987.3 287.0 L1002.7 290.6 L1016.0 290.6 L1019.1 288.0 L1026.3 279.8 L1040.0 277.3 L1057.3 274.3 L1078.8 273.8 L1091.0 277.5 L1118.9 276.8 L1134.3 283.0 L1165.0 287.6 L1206.7 295.3" stroke="#e01010" stroke-width="2" stroke-dasharray="6 3" fill="none"/>
<path d="M676.7 73.2 L681.7 78.2 L686.7 83.5 L691.7 88.9 L696.7 94.6 L701.7 100.3 L706.7 106.2 L711.7 112.2 L716.7 118.3 L721.7 124.5 L726.7 130.7 L731.7 137.0 L736.7 143.3 L741.7 149.6 L746.7 155.8 L751.7 162.1 L756.7 168.2 L761.7 174.3 L766.7 180.3 L771.7 186.3 L776.7 192.0 L781.7 197.7 L786.7 203.1 L791.7 208.4 L796.7 213.5 L801.7 218.4 L806.7 223.0 L806.9 223.6 L824.0 239.8 L850.9 252.3 L880.0 262.8 L909.4 272.3 L941.0 281.3 L956.5 280.5 L965.7 281.8 L977.0 287.5 L1000.7 292.1 L1025.3 292.7 L1072.7 293.1 L1103.5 296.0 L1206.7 308.3" stroke="#000" stroke-width="2" fill="none" stroke-linejoin="round"/></g>
<g clip-path="url(#cb)"><path d="M677.5 382.8 L682.5 387.8 L687.5 393.0 L692.5 398.5 L697.5 404.1 L702.5 409.9 L707.5 415.8 L712.5 421.8 L717.5 427.8 L722.5 434.0 L727.5 440.2 L732.5 446.5 L737.5 452.8 L742.5 459.0 L747.5 465.3 L752.5 471.5 L757.5 477.7 L762.5 483.8 L767.5 489.8 L772.5 495.7 L777.5 501.5 L782.5 507.1 L787.5 512.6 L792.5 517.8 L797.5 522.9 L802.5 527.8 L807.5 532.4 L807.7 533.0 L823.0 548.6 L872.4 573.2 L909.4 582.5 L941.1 592.1 L956.5 593.7 L966.8 595.7 L987.3 595.7 L1002.7 599.3 L1016.0 599.3 L1019.1 596.7 L1026.3 588.5 L1040.0 586.0 L1057.3 583.0 L1078.8 582.5 L1091.0 586.2 L1118.9 585.5 L1134.3 591.7 L1165.0 596.3 L1206.7 604.0" stroke="#e01010" stroke-width="2" stroke-dasharray="6 3" fill="none"/>
<path d="M676.7 382.2 L681.7 387.2 L686.7 392.4 L691.7 397.9 L696.7 403.5 L701.7 409.3 L706.7 415.2 L711.7 421.2 L716.7 427.2 L721.7 433.4 L726.7 439.6 L731.7 445.9 L736.7 452.2 L741.7 458.4 L746.7 464.7 L751.7 470.9 L756.7 477.1 L761.7 483.2 L766.7 489.2 L771.7 495.1 L776.7 500.9 L781.7 506.5 L786.7 512.0 L791.7 517.2 L796.7 522.3 L801.7 527.2 L806.7 531.8 L806.9 532.4 L824.0 548.6 L850.9 561.0 L880.0 571.5 L909.4 581.0 L941.0 590.0 L956.5 589.2 L965.7 590.5 L977.0 596.2 L1000.7 600.8 L1025.3 601.4 L1072.7 601.8 L1103.5 604.7 L1206.7 617.0" stroke="#000" stroke-width="2" fill="none" stroke-linejoin="round"/></g>
<path d="M1351 70.5H1366" stroke="#00008c" stroke-width="1"/>
<path d="M1351 88H1366" stroke="#e01010" stroke-width="2" stroke-dasharray="6 3"/>
<path d="M1351 105H1366" stroke="#000" stroke-width="2"/>
<path d="M1351 380.5H1366" stroke="#e4e8ee" stroke-width="1"/>
<path d="M1351 397.5H1366" stroke="#e4e8ee" stroke-width="1"/>
<path d="M1351 414.5H1366" stroke="#e4e8ee" stroke-width="1"/>
<path d="M1351 431.5H1366" stroke="#e4e8ee" stroke-width="1"/>
<path d="M1351 448.5H1366" stroke="#e4e8ee" stroke-width="1"/>
<path d="M1351 466.5H1366" stroke="#e4e8ee" stroke-width="1"/>
<path d="M1351 483H1366" stroke="#e01010" stroke-width="2" stroke-dasharray="6 3"/>
<path d="M1351 500H1366" stroke="#000" stroke-width="2"/>
</svg>
<div class="t" style="left:554px;top:36px;font-size:17.3px;font-weight:bold;letter-spacing:0.54px;color:#000;-webkit-text-stroke:0">WATFLOOD Forecast Output (GEPS Ensemble) for Burntwood abv Leaf Rapids</div>
<div class="t" style="left:445px;width:60px;text-align:right;top:315px;font-size:10px;letter-spacing:0.6px;color:#000;-webkit-text-stroke:0.1px #000;transform:scaleX(0.8);transform-origin:100% 0">102.5</div>
<div class="t" style="left:445px;width:60px;text-align:right;top:623px;font-size:10px;letter-spacing:0.6px;color:#000;-webkit-text-stroke:0.1px #000;transform:scaleX(0.8);transform-origin:100% 0">102.5</div>
<div class="t" style="left:445px;width:60px;text-align:right;top:279px;font-size:10px;letter-spacing:0.6px;color:#000;-webkit-text-stroke:0.1px #000;transform:scaleX(0.8);transform-origin:100% 0">105.0</div>
<div class="t" style="left:445px;width:60px;text-align:right;top:586px;font-size:10px;letter-spacing:0.6px;color:#000;-webkit-text-stroke:0.1px #000;transform:scaleX(0.8);transform-origin:100% 0">105.0</div>
<div class="t" style="left:445px;width:60px;text-align:right;top:242px;font-size:10px;letter-spacing:0.6px;color:#000;-webkit-text-stroke:0.1px #000;transform:scaleX(0.8);transform-origin:100% 0">107.5</div>
<div class="t" style="left:445px;width:60px;text-align:right;top:550px;font-size:10px;letter-spacing:0.6px;color:#000;-webkit-text-stroke:0.1px #000;transform:scaleX(0.8);transform-origin:100% 0">107.5</div>
<div class="t" style="left:445px;width:60px;text-align:right;top:205px;font-size:10px;letter-spacing:0.6px;color:#000;-webkit-text-stroke:0.1px #000;transform:scaleX(0.8);transform-origin:100% 0">110.0</div>
<div class="t" style="left:445px;width:60px;text-align:right;top:513px;font-size:10px;letter-spacing:0.6px;color:#000;-webkit-text-stroke:0.1px #000;transform:scaleX(0.8);transform-origin:100% 0">110.0</div>
<div class="t" style="left:445px;width:60px;text-align:right;top:168px;font-size:10px;letter-spacing:0.6px;color:#000;-webkit-text-stroke:0.1px #000;transform:scaleX(0.8);transform-origin:100% 0">112.5</div>
<div class="t" style="left:445px;width:60px;text-align:right;top:476px;font-size:10px;letter-spacing:0.6px;color:#000;-webkit-text-stroke:0.1px #000;transform:scaleX(0.8);transform-origin:100% 0">112.5</div>
<div class="t" style="left:445px;width:60px;text-align:right;top:131px;font-size:10px;letter-spacing:0.6px;color:#000;-webkit-text-stroke:0.1px #000;transform:scaleX(0.8);transform-origin:100% 0">115.0</div>
<div class="t" style="left:445px;width:60px;text-align:right;top:439px;font-size:10px;letter-spacing:0.6px;color:#000;-webkit-text-stroke:0.1px #000;transform:scaleX(0.8);transform-origin:100% 0">115.0</div>
<div class="t" style="left:445px;width:60px;text-align:right;top:95px;font-size:10px;letter-spacing:0.6px;color:#000;-webkit-text-stroke:0.1px #000;transform:scaleX(0.8);transform-origin:100% 0">117.5</div>
<div class="t" style="left:445px;width:60px;text-align:right;top:403px;font-size:10px;letter-spacing:0.6px;color:#000;-webkit-text-stroke:0.1px #000;transform:scaleX(0.8);transform-origin:100% 0">117.5</div>
<div class="t" style="left:445px;width:60px;text-align:right;top:58px;font-size:10px;letter-spacing:0.6px;color:#000;-webkit-text-stroke:0.1px #000;transform:scaleX(0.8);transform-origin:100% 0">120.0</div>
<div class="t" style="left:445px;width:60px;text-align:right;top:366px;font-size:10px;letter-spacing:0.6px;color:#000;-webkit-text-stroke:0.1px #000;transform:scaleX(0.8);transform-origin:100% 0">120.0</div>
<div class="t" style="left:569.3px;width:80px;text-align:center;top:668px;font-size:10px;color:#000;line-height:11px;-webkit-text-stroke:0.1px #000;transform:scaleX(0.89);transform-origin:50% 0">04-30-2019<br>00:00</div>
<div class="t" style="left:668.6px;width:80px;text-align:center;top:668px;font-size:10px;color:#000;line-height:11px;-webkit-text-stroke:0.1px #000;transform:scaleX(0.89);transform-origin:50% 0">05-03-2019<br>00:00</div>
<div class="t" style="left:767.9px;width:80px;text-align:center;top:668px;font-size:10px;color:#000;line-height:11px;-webkit-text-stroke:0.1px #000;transform:scaleX(0.89);transform-origin:50% 0">05-06-2019<br>00:00</div>
<div class="t" style="left:867.2px;width:80px;text-align:center;top:668px;font-size:10px;color:#000;line-height:11px;-webkit-text-stroke:0.1px #000;transform:scaleX(0.89);transform-origin:50% 0">05-09-2019<br>00:00</div>
<div class="t" style="left:966.5px;width:80px;text-align:center;top:668px;font-size:10px;color:#000;line-height:11px;-webkit-text-stroke:0.1px #000;transform:scaleX(0.89);transform-origin:50% 0">05-12-2019<br>00:00</div>
<div class="t" style="left:1065.8px;width:80px;text-align:center;top:668px;font-size:10px;color:#000;line-height:11px;-webkit-text-stroke:0.1px #000;transform:scaleX(0.89);transform-origin:50% 0">05-15-2019<br>00:00</div>
<div class="t" style="left:1165.1px;width:80px;text-align:center;top:668px;font-size:10px;color:#000;line-height:11px;-webkit-text-stroke:0.1px #000;transform:scaleX(0.89);transform-origin:50% 0">05-18-2019<br>00:00</div>
<div class="t" style="left:1264.4px;width:80px;text-align:center;top:668px;font-size:10px;color:#000;line-height:11px;-webkit-text-stroke:0.1px #000;transform:scaleX(0.89);transform-origin:50% 0">05-21-2019<br>00:00</div>
<div class="t" style="left:412px;top:201px;width:100px;text-align:center;font-size:10px;color:#000;transform:rotate(-90deg);transform-origin:50% 50%;line-height:12px">Discharge (m3/s)</div>
<div class="t" style="left:412px;top:509px;width:100px;text-align:center;font-size:10px;color:#000;transform:rotate(-90deg);transform-origin:50% 50%;line-height:12px">Discharge (m3/s)</div>
<div class="t" style="left:1368px;top:67.0px;font-size:10px;color:#000">QR.sim [1]&nbsp; (GEPS)</div>
<div class="t" style="left:1368px;top:84.2px;font-size:10px;color:#000">QR.sim GEPS median [1]</div>
<div class="t" style="left:1368px;top:101.4px;font-size:10px;color:#000">RDPS-GDPS-GEPS(0) [2]</div>
<div class="t" style="left:1368px;top:376.0px;font-size:10px;color:#000">QR.sim GEPS max [1]</div>
<div class="t" style="left:1368px;top:393.2px;font-size:10px;color:#000">QR.sim GEPS min [1]</div>
<div class="t" style="left:1368px;top:410.4px;font-size:10px;color:#000">QR.sim GEPS 90 [1]</div>
<div class="t" style="left:1368px;top:427.6px;font-size:10px;color:#000">QR.sim GEPS 10 [1]</div>
<div class="t" style="left:1368px;top:444.8px;font-size:10px;color:#000">QR.sim GEPS 75 [1]</div>
<div class="t" style="left:1368px;top:462.0px;font-size:10px;color:#000">QR.sim GEPS 25 [1]</div>
<div class="t" style="left:1368px;top:479.2px;font-size:10px;color:#000">QR.sim GEPS median [1]</div>
<div class="t" style="left:1368px;top:496.4px;font-size:10px;color:#000">RDPS-GDPS-GEPS(0) [2]</div>
<div class="t" style="left:448px;top:693px;font-size:12px;color:#111">WATFLOOD_LNRB_GEPS_Forecast: [1] GEPS Forecast 05-02-2019 01:00:00 CDT Local</div>
<div class="t" style="left:448px;top:711px;font-size:12px;color:#111;letter-spacing:0.1px">WATFLOOD_LNRB_GEPS_0_Forecast: [2] Iteration Run 05-02-2019 01:00:00 CDT Local</div>
<div class="a" style="left:3px;top:746px;width:52px;height:29px;border:1px solid #9c9c9c;background:linear-gradient(#d5d5d5,#e2e2e2 45%,#ececec)"></div>
<div class="a" style="left:187px;top:746px;width:97px;height:29px;border:1px solid #9c9c9c;background:linear-gradient(#d5d5d5,#e2e2e2 45%,#ececec)"></div>
<div class="a" style="left:284px;top:746px;width:74px;height:29px;border:1px solid #9c9c9c;background:linear-gradient(#d5d5d5,#e2e2e2 45%,#ececec)"></div>
<div class="a" style="left:358px;top:746px;width:101px;height:29px;border:1px solid #9c9c9c;background:linear-gradient(#d5d5d5,#e2e2e2 45%,#ececec)"></div>
<div class="a" style="left:54px;top:746px;width:134px;height:31px;background:#fff;border:1px solid #9c9c9c;border-top:none"></div>
<div class="a" style="left:1px;top:746px;width:54px;height:1px;background:#8a8a8a"></div>
<div class="a" style="left:187px;top:746px;width:1303px;height:1px;background:#8a8a8a"></div>
<svg class="a" style="left:0;top:740px" width="470" height="39" viewBox="0 740 470 39">
<g fill="none" stroke="#000" stroke-width="1.1"><circle cx="18" cy="760" r="8.6"/><ellipse cx="18" cy="760" rx="4" ry="8.6"/><path d="M9.6 756.5h16.8M9.6 763.5h16.8M9.4 760h17.2M18 751.4v17.2"/></g>
<path d="M64 768.5h14" stroke="#000" stroke-width="1.3"/><rect x="65" y="759" width="3.5" height="9" fill="#1a2ad8" stroke="#000" stroke-width="0.8"/><rect x="69" y="755" width="3.5" height="13" fill="#f2ea10" stroke="#000" stroke-width="0.8"/><rect x="73" y="757.5" width="3.5" height="10.5" fill="#e01818" stroke="#000" stroke-width="0.8"/><path d="M64.5 754v14" stroke="#000" stroke-width="1"/>
<rect x="152.5" y="757.5" width="8" height="8" fill="none" stroke="#000" stroke-width="1.3"/><path d="M153.5 757.5h6" stroke="#000" stroke-width="2"/>
<path d="M167.5 757.5l8 8M175.5 757.5l-8 8" stroke="#000" stroke-width="2"/>
<defs><radialGradient id="gl" cx="0.35" cy="0.4" r="0.7"><stop offset="0" stop-color="#8ec4ff"/><stop offset="0.5" stop-color="#2a6ad8"/><stop offset="1" stop-color="#0a2f8a"/></radialGradient></defs>
<circle cx="205.5" cy="759.7" r="10.6" fill="url(#gl)"/><path d="M207 757c3-1 5 1 6 3s-1 5-3 7c-1-2-3-4-3-6z M200 751c2 0 4 0 5 1-1 2-3 2-4 3z" fill="#1c2630"/>
<path transform="translate(289 749) scale(0.88) translate(-289 -749)" d="M292 765.5l9-9a4 4 0 0 1 5-5l-2.6 2.6 0.6 2.3 2.3 0.6 2.6-2.6a4 4 0 0 1-5 5l-9 9a2 2 0 0 1-3-3z" fill="#9bbfe8" stroke="#6a8fc0" stroke-width="0.8"/>
<path d="M364.5 748.5h12l2 2v16h-14z" fill="#fff" stroke="#222" stroke-width="1.2"/><path d="M371.5 753.5h12l2 2v16h-14z" fill="#fff" stroke="#222" stroke-width="1.2"/>
<rect x="366" y="751" width="4" height="1" fill="#999"/><rect x="373.5" y="757" width="9" height="1" fill="#999"/>
<rect x="366" y="753" width="4" height="1" fill="#999"/><rect x="373.5" y="759" width="9" height="1" fill="#999"/>
<rect x="366" y="755" width="4" height="1" fill="#999"/><rect x="373.5" y="761" width="9" height="1" fill="#999"/>
<rect x="366" y="757" width="4" height="1" fill="#999"/><rect x="373.5" y="763" width="9" height="1" fill="#999"/>
<rect x="366" y="759" width="4" height="1" fill="#999"/><rect x="373.5" y="765" width="9" height="1" fill="#999"/>
<rect x="366" y="761" width="4" height="1" fill="#999"/><rect x="373.5" y="767" width="9" height="1" fill="#999"/>
</svg>
<div class="t" style="left:30px;top:755px;font-size:11px;color:#111">Map</div>
<div class="t" style="left:83px;top:757px;font-size:11px;color:#111">Data Display</div>
<div class="t" style="left:220px;top:755px;font-size:11px;color:#111">Spatial Data</div>
<div class="t" style="left:309px;top:755px;font-size:11px;color:#111">Modifiers</div>
<div class="t" style="left:392px;top:755px;font-size:11px;color:#111;transform:scaleX(0.97);transform-origin:0 0">Web Browser</div>
</body></html>
